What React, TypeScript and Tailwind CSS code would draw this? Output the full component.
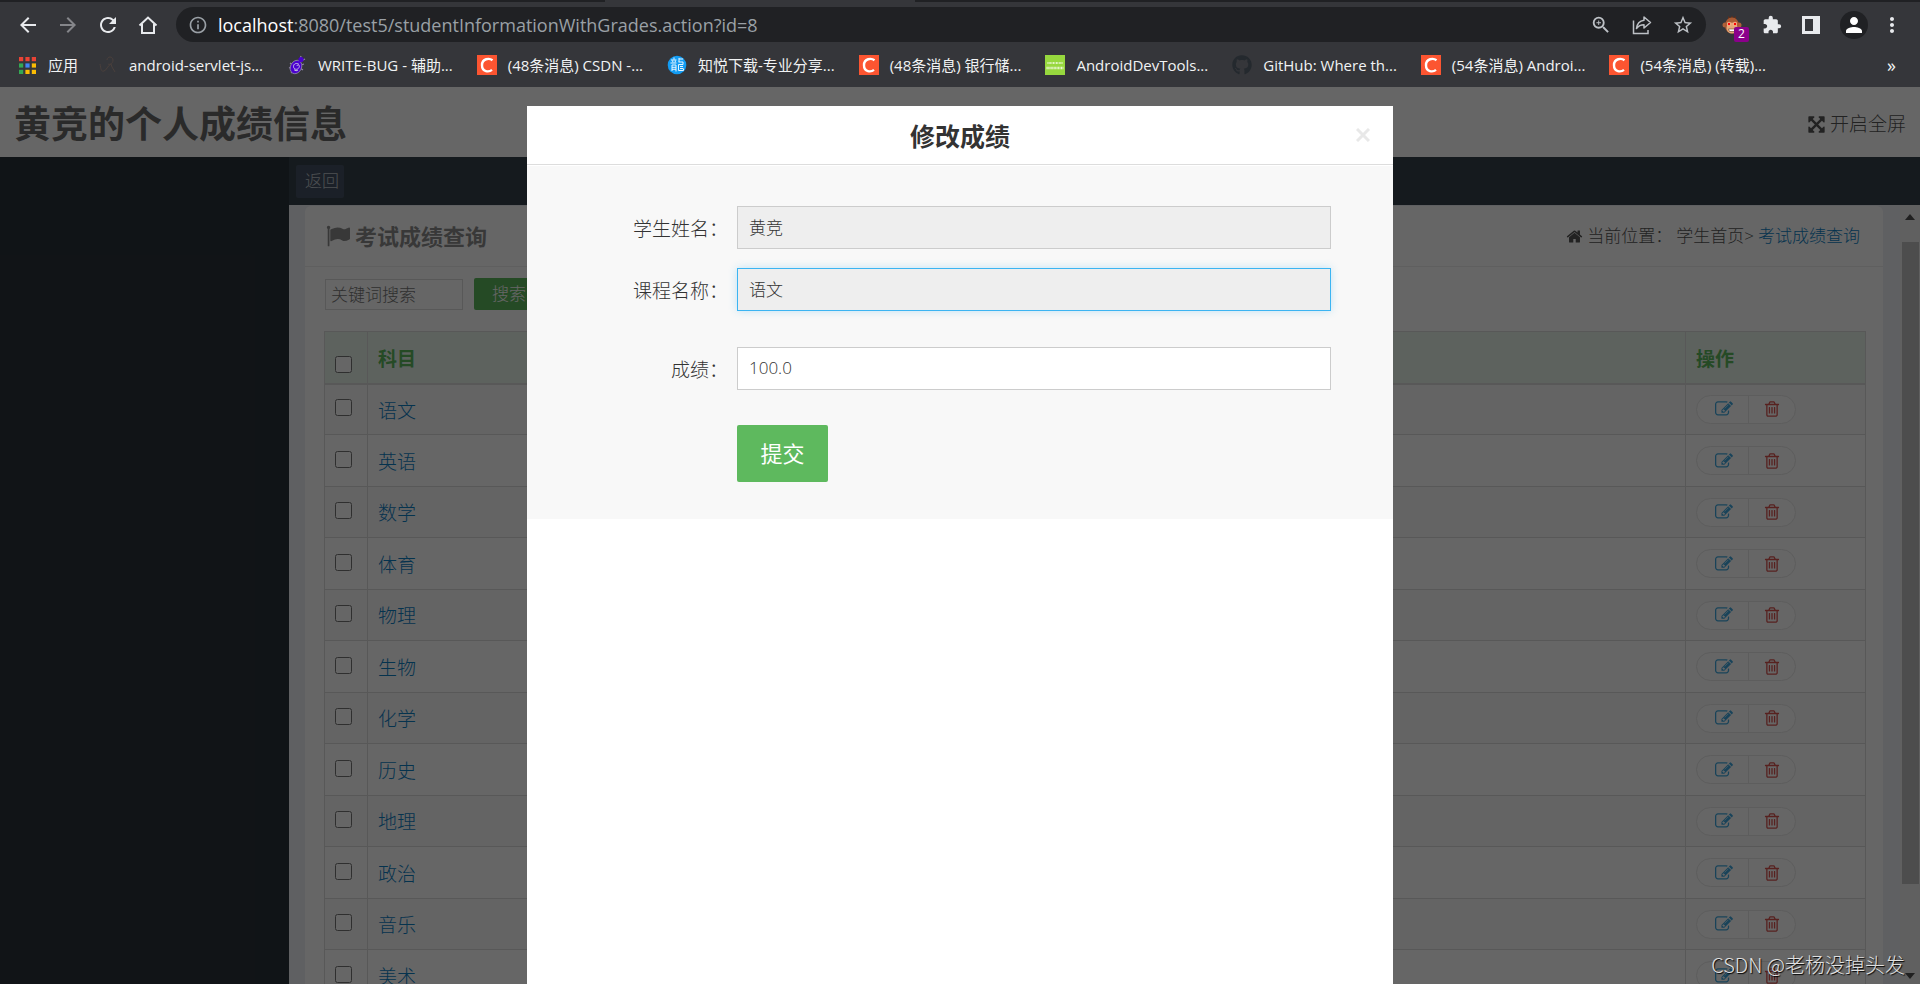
import type { ReactNode } from 'react';
import { FaGithub } from 'react-icons/fa';
import {
  MdArrowBack,
  MdArrowForward,
  MdExtension,
  MdInfoOutline,
  MdMoreVert,
  MdPerson,
  MdRefresh,
  MdStarBorder,
  MdZoomIn,
} from 'react-icons/md';

const subjects = ['语文', '英语', '数学', '体育', '物理', '生物', '化学', '历史', '地理', '政治', '音乐', '美术'];

// ========================================
// 图标
// ========================================
const glyphs = {
  edit: 'M888 1184l116-116-152-152-116 116v56h96v96h56zm440-720q-16-16-33 1l-350 350q-17 17-1 33t33-1l350-350q17-17 1-33zm80 594v190q0 119-84.5 203.5t-203.5 84.5h-832q-119 0-203.5-84.5t-84.5-203.5v-832q0-119 84.5-203.5t203.5-84.5h832q63 0 117 25 15 7 18 23 3 17-9 29l-49 49q-14 14-32 8-23-6-45-6h-832q-66 0-113 47t-47 113v832q0 66 47 113t113 47h832q66 0 113-47t47-113v-126q0-13 9-22l64-64q15-15 35-7t20 29zm-96-738l288 288-672 672h-288v-288zm444 132l-92 92-288-288 92-92q28-28 68-28t68 28l152 152q28 28 28 68t-28 68z',
  trash: 'M704 736v576q0 14-9 23t-23 9h-64q-14 0-23-9t-9-23v-576q0-14 9-23t23-9h64q14 0 23 9t9 23zm256 0v576q0 14-9 23t-23 9h-64q-14 0-23-9t-9-23v-576q0-14 9-23t23-9h64q14 0 23 9t9 23zm256 0v576q0 14-9 23t-23 9h-64q-14 0-23-9t-9-23v-576q0-14 9-23t23-9h64q14 0 23 9t9 23zm128 724v-948h-896v948q0 22 7 40.5t14.5 27 10.5 8.5h832q3 0 10.5-8.5t14.5-27 7-40.5zm-672-1076h448l-48-117q-7-9-17-11h-317q-10 2-17 11zm928 32v64q0 14-9 23t-23 9h-96v948q0 83-47 143.5t-113 60.5h-832q-66 0-113-58.5t-47-141.5v-952h-96q-14 0-23-9t-9-23v-64q0-14 9-23t23-9h309l70-167q15-37 54-63t79-26h320q40 0 79 26t54 63l70 167h309q14 0 23 9t9 23z',
  home: 'M1472 992v480q0 26-19 45t-45 19h-384v-384h-256v384h-384q-26 0-45-19t-19-45v-480q0-1 .5-3t.5-3l575-474 575 474q1 2 1 6zm223-69l-62 74q-8 9-21 11h-3q-13 0-21-7l-692-577-692 577q-12 8-24 7-13-2-21-11l-62-74q-8-10-7-23.5t11-21.5l719-599q32-26 76-26t76 26l244 204v-195q0-14 9-23t23-9h192q14 0 23 9t9 23v408l219 182q10 8 11 21.5t-7 23.5z',
  flag: 'M320 256q0 72-64 110v1266q0 13-9.5 22.5t-22.5 9.5h-64q-13 0-22.5-9.5t-9.5-22.5v-1266q-64-38-64-110 0-53 37.5-90.5t90.5-37.5 90.5 37.5 37.5 90.5zm1472 64v763q0 25-12.5 38.5t-39.5 27.5q-215 116-369 116-61 0-123.5-22t-108.5-48-115.5-48-142.5-22q-192 0-464 146-17 9-33 9-26 0-45-19t-19-45v-742q0-32 31-55 21-14 79-43 236-120 421-120 107 0 200 29t219 88q38 19 88 19 54 0 117.5-21t110-47 88-47 54.5-21q26 0 45 19t19 45z',
  arrows:
    'M1411 541l-355 355 355 355 144-144q29-31 70-14 39 17 39 59v448q0 26-19 45t-45 19h-448q-42 0-59-40-17-39 14-69l144-144-355-355-355 355 144 144q31 30 14 69-17 40-59 40h-448q-26 0-45-19t-19-45v-448q0-42 40-59 39-17 69 14l144 144 355-355-355-355-144 144q-19 19-45 19-12 0-24-5-40-17-40-59v-448q0-26 19-45t45-19h448q42 0 59 40 17 39-14 69l-144 144 355 355 355-355-144-144q-31-30-14-69 17-40 59-40h448q26 0 45 19t19 45v448q0 42-39 59-13 5-25 5-26 0-45-19z',
};

function Icon({ name, className }: { name: keyof typeof glyphs; className: string }) {
  return (
    <svg viewBox="0 0 1792 1792" fill="currentColor" className={className} aria-hidden="true">
      <path d={glyphs[name]} />
    </svg>
  );
}

function AppsIcon() {
  const colors = ['#ea4335', '#ea4335', '#ea4335', '#34a853', '#4285f4', '#fbbc04', '#34a853', '#fbbc04', '#fbbc04'];
  return (
    <svg viewBox="0 0 17 17" className="size-[17px] shrink-0" aria-hidden="true">
      {colors.map((c, i) => (
        <rect key={i} x={(i % 3) * 6.4} y={Math.floor(i / 3) * 6.4} width="4.2" height="4.2" fill={c} />
      ))}
    </svg>
  );
}

function SketchIcon() {
  return (
    <svg viewBox="0 0 20 20" className="size-5 shrink-0" fill="none" stroke="#4a403c" strokeWidth="1" aria-hidden="true">
      <path d="M9 5c0-4 6-4 6 0s-4 5-5 4M2 9c1 5 1 8 4 7s3-5 7-7M13 9l1 3 3 5" />
    </svg>
  );
}

function BugIcon() {
  return (
    <svg viewBox="0 0 20 20" className="size-5 shrink-0" aria-hidden="true">
      <g stroke="#8f86a8" strokeWidth="1.2">
        <path d="M3 8l3 2M2 13l3-1M4 18l2-2M17 9l-3 1M16 15l-3-2M14 1l-1 4M18 4l-4 2" />
      </g>
      <ellipse cx="9" cy="12" rx="5.5" ry="7" transform="rotate(28 9 12)" fill="#4a00d0" stroke="#8f86a8" strokeWidth=".8" />
      <circle cx="14" cy="4.5" r="2.6" fill="#4a00d0" />
      <path d="M12 9.5c-2-2-5.500-1-5.500 2s4 4 5.500 1-1.500-3-2.500-1.500M7 14.500c1 1.500 3 1.500 4 .5" fill="none" stroke="#c9bfe6" strokeWidth="1" />
    </svg>
  );
}

function CsdnIcon() {
  return (
    <span className="flex size-5 shrink-0 items-center justify-center bg-[#fc5531]">
      <svg viewBox="0 0 20 20" className="size-5" fill="none" stroke="#fff" strokeWidth="2.4" aria-hidden="true">
        <path d="M15.500 5.200C12.500 3 5 3.200 5 10.200s7 7 10 4.700" />
      </svg>
    </span>
  );
}

function DragonIcon() {
  return (
    <svg viewBox="0 0 20 20" className="size-5 shrink-0" aria-hidden="true">
      <circle cx="10" cy="10" r="9.300" fill="#129cf3" />
      <path
        d="M7 2.500v2M4 5h5.500M5.500 5.500l.5 2M8.500 5.500l-.5 2M3.500 8h6M5 10v6M5 10h4v6.500M5 12.300h4M5 14.300h4M12 3v4M12 4h4M11.500 7h4.500v2.500h-4.500v6h5v-2M13 11.500h3M13 13.500h3"
        fill="none"
        stroke="#e6f5ff"
        strokeWidth="1"
      />
    </svg>
  );
}

function AndroidIcon() {
  return (
    <span className="flex size-5 shrink-0 flex-col items-center justify-center bg-[#97d83e]" aria-hidden="true">
      <svg viewBox="0 0 20 20" className="size-5" fill="none" stroke="#eaf8d4">
        <path d="M2.500 8h15" strokeWidth="2" strokeDasharray="1 .5 .6 .7" />
        <path d="M1.500 13h17" strokeWidth="2.600" strokeDasharray="1.200 .5 .7 .5" />
      </svg>
    </span>
  );
}

function ShareIcon() {
  return (
    <svg viewBox="0 0 20 20" className="size-5" fill="none" stroke="currentColor" strokeWidth="1.500" aria-hidden="true">
      <path d="M1.500 5.500v13H16v-3.500" />
      <path d="M12 2l6.500 5.500L12 13V9.800c-3.500 0-5.500 1-7.500 3.700.5-4.500 3-7.500 7.500-8.200z" strokeLinejoin="round" />
    </svg>
  );
}

function MonkeyIcon() {
  return (
    <svg viewBox="0 0 20 20" className="size-5" aria-hidden="true">
      <circle cx="3" cy="10" r="2.500" fill="#b0623a" />
      <circle cx="17" cy="10" r="2.500" fill="#b0623a" />
      <path d="M6 4V1l2.500 2L10 .5 11.500 3 14 1v3z" fill="#5f2f1c" />
      <ellipse cx="10" cy="10.500" rx="7" ry="8" fill="#a85a34" />
      <ellipse cx="10" cy="13" rx="5.500" ry="5.500" fill="#e6a878" />
      <circle cx="7" cy="9" r="2.200" fill="#f2b48a" />
      <circle cx="13" cy="9" r="2.200" fill="#f2b48a" />
      <circle cx="7" cy="9" r="1.200" fill="#f00" />
      <circle cx="13" cy="9" r="1.200" fill="#f00" />
      <path d="M6.500 14h7l-1 2.500h-5z" fill="#fff" stroke="#6b3a22" strokeWidth=".6" />
    </svg>
  );
}

const bookmarks: { label: string; icon: ReactNode }[] = [
  { label: 'android-servlet-js...', icon: <SketchIcon /> },
  { label: 'WRITE-BUG - 辅助...', icon: <BugIcon /> },
  { label: '(48条消息) CSDN -...', icon: <CsdnIcon /> },
  { label: '知悦下载-专业分享...', icon: <DragonIcon /> },
  { label: '(48条消息) 银行储...', icon: <CsdnIcon /> },
  { label: 'AndroidDevTools...', icon: <AndroidIcon /> },
  { label: 'GitHub: Where th...', icon: <FaGithub className="size-5 shrink-0 text-[#24292e]" /> },
  { label: '(54条消息) Androi...', icon: <CsdnIcon /> },
  { label: '(54条消息) (转载)...', icon: <CsdnIcon /> },
];

// ========================================
// 浏览器工具栏
// ========================================
function BrowserBar() {
  return (
    <div className="shrink-0 bg-[#35363a] text-[#e8eaed]">
      <div className="flex h-[2px] justify-center bg-[#202124] pr-[400px]">
        <div className="w-[310px] bg-[#35363a]" />
      </div>
      <div className="flex h-[45px] items-center pr-6 pl-4">
        <div className="flex items-center gap-4">
          <button aria-label="后退"><MdArrowBack className="size-6" /></button>
          <button aria-label="前进" className="text-[#85868a]"><MdArrowForward className="size-6" /></button>
          <button aria-label="刷新"><MdRefresh className="size-6" /></button>
          <button aria-label="主页">
            <svg viewBox="0 0 24 24" className="size-6" fill="none" stroke="currentColor" strokeWidth="2" aria-hidden="true">
              <path d="M3.500 12.500L12 4.500l8.500 8M6 11v9h12v-9" />
            </svg>
          </button>
        </div>
        <div className="ml-4 flex h-[35px] flex-1 items-center rounded-full bg-[#202124] pr-3 pl-3 text-[#bdc1c6]">
          <MdInfoOutline className="size-5 text-[#9aa0a6]" />
          <div className="ml-[10px] flex-1 text-lg leading-6 text-[#9aa0a6]">
            <span className="text-white">localhost</span>:8080/test5/studentInformationWithGrades.action?id=8
          </div>
          <div className="flex items-center gap-5">
            <button aria-label="缩放"><MdZoomIn className="size-[22px]" /></button>
            <button aria-label="分享"><ShareIcon /></button>
            <button aria-label="收藏"><MdStarBorder className="size-[22px]" /></button>
          </div>
        </div>
        <div className="ml-4 flex items-center gap-5">
          <button aria-label="扩展" className="relative">
            <MonkeyIcon />
            <span className="absolute top-3 left-3 flex h-[15px] w-[15px] items-center justify-center rounded-xs bg-[#8b008b] text-xs text-white">
              2
            </span>
          </button>
          <button aria-label="扩展程序"><MdExtension className="size-5" /></button>
          <button aria-label="侧边栏">
            <svg viewBox="0 0 18 18" className="size-[18px]" aria-hidden="true">
              <path fillRule="evenodd" fill="currentColor" d="M0 0h18v18H0zM3 3v12h8V3z" />
            </svg>
          </button>
          <button aria-label="用户" className="flex size-7 items-center justify-center rounded-full bg-[#202124]">
            <MdPerson className="size-6 text-white" />
          </button>
          <button aria-label="更多" className="-mx-2"><MdMoreVert className="size-6" /></button>
        </div>
      </div>
      <nav className="flex h-10 items-center gap-5 pr-6 pb-1 pl-[19px] text-[15px] leading-5 text-[#f1f3f4]">
        <a href="#" className="flex items-center gap-3">
          <AppsIcon />
          应用
        </a>
        <div className="flex items-center gap-6">
          {bookmarks.map((b) => (
            <a key={b.label} href="#" className="flex items-center gap-[11px] whitespace-nowrap">
              {b.icon}
              {b.label}
            </a>
          ))}
        </div>
        <button aria-label="更多书签" className="ml-auto text-lg">»</button>
      </nav>
    </div>
  );
}

// ========================================
// 成绩列表
// ========================================
function GradeTable() {
  return (
    <table className="w-full border-collapse border border-[#ddd] text-[19px]">
      <thead>
        <tr className="h-[52px] border-b-2 border-[#ddd] bg-[#e8f5ec] text-left text-[#5cb85c]">
          <th className="w-[43px] border-r border-[#ddd] pl-[10px]">
            <input type="checkbox" aria-label="全选" className="mt-[14px] block size-[17px]" />
          </th>
          <th className="border-r border-[#ddd] px-[10px] pt-[3px]">科目</th>
          <th className="w-[180px] px-[10px] pt-[3px]">操作</th>
        </tr>
      </thead>
      <tbody>
        {subjects.map((name) => (
          <tr key={name} className="h-[51px] border-b border-[#ddd] odd:bg-[#f9f9f9] even:h-[52px]">
            <td className="border-r border-[#ddd] pl-[10px]">
              <input type="checkbox" aria-label={name} className="mb-[3px] block size-[17px]" />
            </td>
            <td className="border-r border-[#ddd] px-[10px] pt-[3px]">
              <a href="#" className="text-[#0e7fc4]">{name}</a>
            </td>
            <td className="px-[10px]">
              <div className="flex h-[29px] w-[100px] rounded-full border border-[#e8e8e8] bg-white">
                <button aria-label="编辑" className="flex flex-1 items-center justify-center border-r border-[#e8e8e8] pl-1 text-[#3fa9e0]">
                  <Icon name="edit" className="size-[18px]" />
                </button>
                <button aria-label="删除" className="flex flex-1 items-center justify-center text-[#d9534f]">
                  <Icon name="trash" className="size-[18px]" />
                </button>
              </div>
            </td>
          </tr>
        ))}
      </tbody>
    </table>
  );
}

// ========================================
// 修改成绩弹窗
// ========================================
function EditDialog() {
  const label = 'w-[210px] shrink-0 pt-1 pr-[9px] text-right text-[19px]';
  const input = 'h-[43px] min-w-0 flex-1 border px-[11px] pb-[2px] text-[17px] outline-none';
  return (
    <div className="absolute inset-0 flex justify-center bg-black/60 pt-[19px]">
      <section role="dialog" aria-labelledby="dialog-title" className="flex w-[866px] flex-col bg-white">
        <header className="relative flex h-[59px] items-center justify-center border-b border-[#ddd]">
          <h2 id="dialog-title" className="pt-1 text-[25px] font-bold text-[#333]">修改成绩</h2>
          <button aria-label="关闭" className="absolute right-[23px] text-[#e8e8e8]">
            <svg viewBox="0 0 14 14" className="size-[14px]" stroke="currentColor" strokeWidth="3" aria-hidden="true">
              <path d="M1 1l12 12M13 1L1 13" />
            </svg>
          </button>
        </header>
        <form className="mt-px bg-[#f8f8f8] pt-10 pr-[62px] pb-[37px] text-[#333]" onSubmit={(e) => e.preventDefault()}>
          <div className="flex items-center">
            <label htmlFor="student" className={label}>学生姓名：</label>
            <input id="student" readOnly defaultValue="黄竞" className={`${input} border-[#ccc] bg-[#eee]`} />
          </div>
          <div className="mt-[19px] flex items-center">
            <label htmlFor="course" className={label}>课程名称：</label>
            <input
              id="course"
              readOnly
              defaultValue="语文"
              className={`${input} border-[#3bb4f2] bg-[#eee] shadow-[0_0_8px_rgba(59,180,242,0.3)]`}
            />
          </div>
          <div className="mt-9 flex items-center">
            <label htmlFor="score" className={label}>成绩：</label>
            <input id="score" defaultValue="100.0" className={`${input} border-[#ccc] bg-white`} />
          </div>
          <button type="submit" className="mt-[35px] ml-[210px] h-[57px] w-[91px] rounded-xs bg-[#5eb95e] text-[22px] font-normal text-white">
            提交
          </button>
        </form>
      </section>
    </div>
  );
}

export default function App() {
  return (
    <div className="flex h-screen flex-col overflow-hidden font-['Open_Sans','Noto_Sans_CJK_SC',sans-serif]">
      <BrowserBar />
      <div className="relative flex min-h-0 flex-1 flex-col bg-white font-light">
        <header className="flex h-[70px] shrink-0 items-center justify-between px-[14px] pt-1 text-[#6a6a6a]">
          <h1 className="text-[37px] font-bold">黄竞的个人成绩信息</h1>
          <a href="#" className="flex items-center gap-1 text-[19px] text-[#555]">
            <Icon name="arrows" className="size-[19px]" />
            开启全屏
          </a>
        </header>

        <div className="flex min-h-0 flex-1">
          <aside className="w-[289px] shrink-0 bg-[#2a323a]" />
          <div className="flex min-w-0 flex-1 flex-col">
            <div className="flex h-12 shrink-0 items-center bg-[#36434b] pl-[7px]">
              <button className="h-[33px] w-12 rounded-xs bg-[#445264] pl-1 text-[17px] text-[#c0c6cc]">返回</button>
            </div>

            <div className="flex min-h-0 flex-1 bg-[#edf1f5]">
              <main className="mt-px mr-[17px] ml-4 h-fit min-w-0 flex-1 rounded-md bg-white">
                <div className="flex h-[61px] items-center justify-between border-b border-[#eee] pr-[23px] pl-[21px]">
                  <h2 className="flex items-center gap-[5px] text-[22px] font-bold text-[#8c8c8c]">
                    <Icon name="flag" className="size-6" />
                    考试成绩查询
                  </h2>
                  <div className="flex items-center gap-1 text-[17px] text-[#555]">
                    <Icon name="home" className="size-[17px]" />
                    <span>当前位置：</span>
                    <span>学生首页&gt;</span>
                    <a href="#" className="text-[#0e7fc4]">考试成绩查询</a>
                  </div>
                </div>
                <div className="flex items-center gap-[11px] pt-[11px] pl-5">
                  <input
                    aria-label="关键词搜索"
                    placeholder="关键词搜索"
                    className="h-[31px] w-[138px] border border-[#ddd] px-[5px] text-[17px] placeholder:text-[#777]"
                  />
                  <button className="h-8 w-[70px] rounded-xs bg-[#5cb85c] text-[17px] text-white">搜索</button>
                </div>
                <div className="pt-[21px] pr-[17px] pl-[19px]">
                  <GradeTable />
                </div>
              </main>
              {/* 滚动条 */}
              <div className="flex w-5 shrink-0 flex-col items-center justify-between bg-[#f1f1f1] py-[5px]">
                <div className="mt-1 border-x-[5px] border-b-[6px] border-x-transparent border-b-[#505050]" />
                <div className="mt-[22px] mb-[89px] w-[17px] flex-1 bg-[#c1c1c1]" />
                <div className="border-x-[5px] border-t-[6px] border-x-transparent border-t-[#505050]" />
              </div>
            </div>
          </div>
        </div>

        <EditDialog />
        <div className="absolute right-[15px] bottom-1 font-['Noto_Sans_CJK_SC',sans-serif] text-[20px] leading-[30px] text-[#e0e0e0] [text-shadow:1px_1px_1px_#000]">
          CSDN @老杨没掉头发
        </div>
      </div>
    </div>
  );
}
